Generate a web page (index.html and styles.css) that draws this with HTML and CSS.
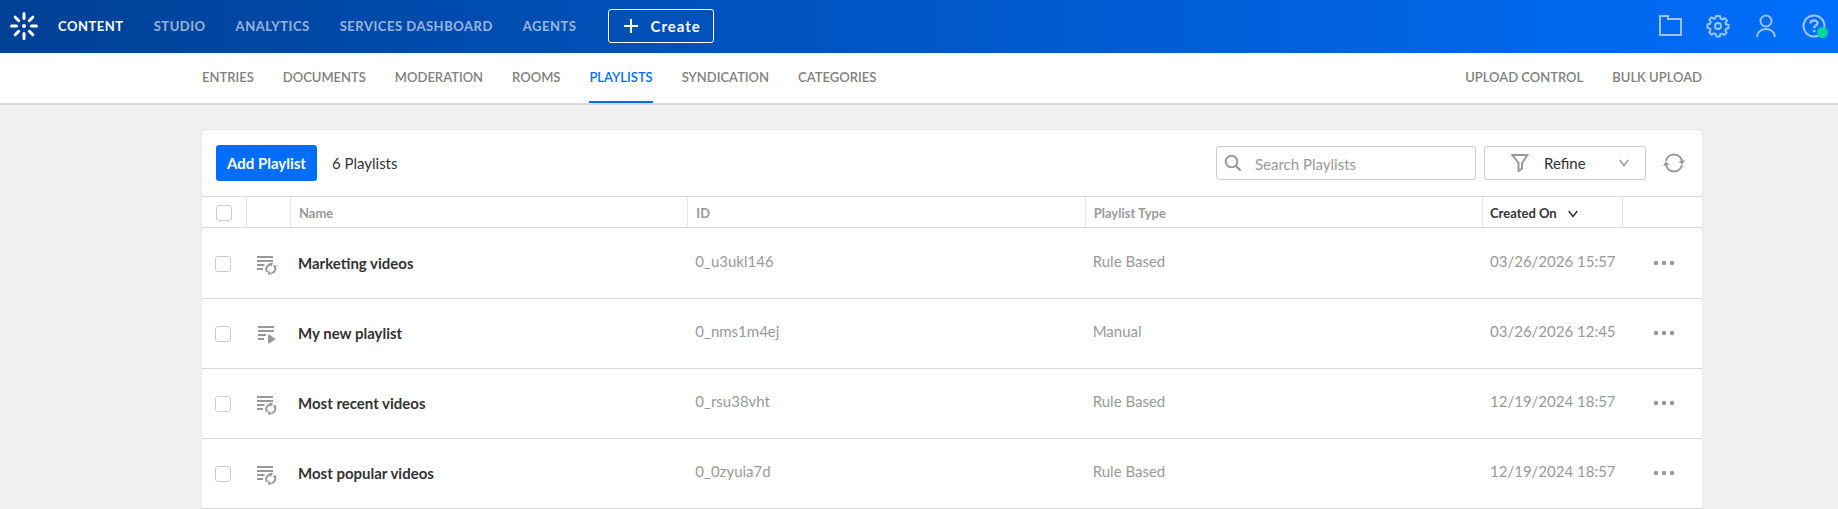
FILE: index.html
```
<!DOCTYPE html>
<html lang="en">
<head>
  <meta charset="UTF-8">
  <meta name="viewport" content="width=device-width, initial-scale=1.0">
  <title>Playlists</title>
  <link rel="stylesheet" href="styles.css">
</head>
<body>
  <svg class="sprite" width="0" height="0">
    <symbol id="icon-rule" viewBox="0 0 20 20">
      <path d="M0 2h16M0 6h16M0 10h7.500M0 14h6" fill="none" stroke="#999" stroke-width="2"/>
      <path d="M13 9.800a4.300 4.300 0 0 0-2.800 7M14.500 18a4.300 4.300 0 0 0 2.800-7" fill="none" stroke="#999" stroke-width="2"/>
      <path d="M12 8h4l-2 4zM11.500 15.500l-.5 4.300 4-.6zM15.500 10.500l4 0-1 3z" fill="#999"/>
    </symbol>
    <symbol id="icon-manual" viewBox="0 0 20 20">
      <path d="M1 2h16M1 6h16M1 10h8M1 14h6" fill="none" stroke="#999" stroke-width="2"/>
      <path d="M11 11q0-2 1.500-1.300l5.200 3.500q1 .8 0 1.600l-5.200 3.500q-1.500.7-1.500-1.300z" fill="#999"/>
    </symbol>
    <symbol id="icon-dots" viewBox="0 0 22 6">
      <circle cx="3" cy="3" r="2.200" fill="#999"/>
      <circle cx="11" cy="3" r="2.200" fill="#999"/>
      <circle cx="19" cy="3" r="2.200" fill="#999"/>
    </symbol>
  </svg>

  <header class="topbar">
    <a class="logo" href="#" aria-label="Home">
      <svg width="28" height="28" viewBox="0 0 28 28" fill="none" stroke="#fff" stroke-width="3" stroke-linecap="round">
        <path d="M14 1.500v5M14 21.500v5M1.500 14h5M21.500 14h5M5.200 5.200l3.500 3.500M19.300 19.300l3.500 3.500M5.200 22.800l3.500-3.500M19.300 8.700l3.500-3.500"/>
        <circle cx="14" cy="14" r="2" fill="#fff" stroke="none"/>
      </svg>
    </a>
    <nav class="main-nav">
      <a class="active" href="#">CONTENT</a>
      <a href="#">STUDIO</a>
      <a href="#">ANALYTICS</a>
      <a href="#">SERVICES DASHBOARD</a>
      <a href="#">AGENTS</a>
    </nav>
    <button class="create-btn">
      <svg width="14" height="14" viewBox="0 0 14 14"><path d="M7 0v14M0 7h14" stroke="#fff" stroke-width="2"/></svg>
      Create
    </button>
    <div class="tools">
      <a href="#" aria-label="Files">
        <svg width="24" height="24" viewBox="0 0 24 24" fill="none" stroke="currentColor" stroke-width="2"><path d="M2 2h8v3h13v16H2z"/></svg>
      </a>
      <a href="#" aria-label="Settings">
        <svg width="24" height="24" viewBox="0 0 24 24" fill="none" stroke="currentColor" stroke-width="2" stroke-linejoin="round">
          <path d="M10 2h4l.6 2.600 1.800.8L18.700 4l2.300 2.700-1.500 2.200.5 1.400 2.500.5v3.400l-2.500.6-.7 1.700L20.600 18.700 18 21l-2.200-1.400-1.500.5L13.700 22.500h-3.400l-.6-2.500-1.700-.7L5.700 20.700 3.300 18.300l1.300-2.200L4 14.500l-2.500-.6v-3.600L4 9.800l.7-1.700L3.300 5.700 5.700 3.300l2.200 1.400 1.600-.6z"/>
          <circle cx="12" cy="12" r="3"/>
        </svg>
      </a>
      <a href="#" aria-label="Account">
        <svg width="24" height="24" viewBox="0 0 24 24" fill="none" stroke="currentColor" stroke-width="2"><circle cx="12" cy="7" r="5.500"/><path d="M3 23a9 8 0 0 1 18 0"/></svg>
      </a>
      <a class="help" href="#" aria-label="Help">
        <svg width="24" height="24" viewBox="0 0 24 24" fill="none" stroke="currentColor" stroke-width="2"><circle cx="12" cy="12" r="10.500"/><path d="M8.500 9.500c0-4 7-4 7-.3 0 2.500-3.300 2.300-3.300 5M12.200 16v2.200" stroke-width="2.400"/></svg>
        <span class="status"></span>
      </a>
    </div>
  </header>

  <div class="subbar">
    <nav class="sub-nav">
      <a href="#">ENTRIES</a>
      <a href="#">DOCUMENTS</a>
      <a href="#">MODERATION</a>
      <a href="#">ROOMS</a>
      <a class="active" href="#">PLAYLISTS</a>
      <a href="#">SYNDICATION</a>
      <a href="#">CATEGORIES</a>
    </nav>
    <nav class="sub-nav">
      <a href="#">UPLOAD CONTROL</a>
      <a href="#">BULK UPLOAD</a>
    </nav>
  </div>

  <main class="content">
    <div class="card">
      <div class="toolbar">
        <button class="add-btn">Add Playlist</button>
        <span class="count">6 Playlists</span>
        <div class="search">
          <svg width="18" height="18" viewBox="0 0 18 18" fill="none" stroke="#999" stroke-width="2"><circle cx="7.500" cy="7.500" r="5.800"/><path d="M11.500 11.500l5 5" stroke-width="2.400"/></svg>
          <input type="text" placeholder="Search Playlists" aria-label="Search Playlists">
        </div>
        <button class="refine-btn">
          <svg width="18" height="18" viewBox="0 0 18 18" fill="none" stroke="#999" stroke-width="2"><path d="M1.500 1h15L11 9v5.500L7.500 17V9z"/></svg>
          <span>Refine</span>
          <svg width="10" height="8" viewBox="0 0 10 8" fill="none" stroke="#999" stroke-width="1.500"><path d="M.7 1L5 6.500 9.300 1"/></svg>
        </button>
        <button class="refresh-btn" aria-label="Refresh">
          <svg width="22" height="20" viewBox="0 0 22 20" fill="none" stroke="#999" stroke-width="2"><path d="M3 8a8.200 8.200 0 0 1 16 0M19 12a8.200 8.200 0 0 1-16 0"/><path d="M15.500 8.500l4 3 2.500-4.500zM6.500 11.500l-4-3L0 13z" fill="#999" stroke="none"/></svg>
        </button>
      </div>

      <table>
        <colgroup>
          <col class="col-check">
          <col class="col-icon">
          <col>
          <col>
          <col>
          <col class="col-date">
          <col class="col-menu">
        </colgroup>
        <thead>
          <tr>
            <th><input type="checkbox" aria-label="Select all"></th>
            <th></th>
            <th>Name</th>
            <th>ID</th>
            <th>Playlist Type</th>
            <th class="sorted">Created On <svg width="10" height="8" viewBox="0 0 10 8" fill="none" stroke="#333" stroke-width="1.500"><path d="M.7 1L5 6.500 9.300 1"/></svg></th>
            <th></th>
          </tr>
        </thead>
        <tbody>
          <tr>
            <td><input type="checkbox" aria-label="Select Marketing videos"></td>
            <td class="type-icon"><svg width="20" height="20"><use href="#icon-rule"/></svg></td>
            <td class="name">Marketing videos</td>
            <td class="info">0_u3ukl146</td>
            <td class="info">Rule Based</td>
            <td class="info">03/26/2026 15:57</td>
            <td class="menu"><button class="menu-btn" aria-label="Actions"><svg width="22" height="6"><use href="#icon-dots"/></svg></button></td>
          </tr>
          <tr>
            <td><input type="checkbox" aria-label="Select My new playlist"></td>
            <td class="type-icon"><svg width="20" height="20"><use href="#icon-manual"/></svg></td>
            <td class="name">My new playlist</td>
            <td class="info">0_nms1m4ej</td>
            <td class="info">Manual</td>
            <td class="info">03/26/2026 12:45</td>
            <td class="menu"><button class="menu-btn" aria-label="Actions"><svg width="22" height="6"><use href="#icon-dots"/></svg></button></td>
          </tr>
          <tr>
            <td><input type="checkbox" aria-label="Select Most recent videos"></td>
            <td class="type-icon"><svg width="20" height="20"><use href="#icon-rule"/></svg></td>
            <td class="name">Most recent videos</td>
            <td class="info">0_rsu38vht</td>
            <td class="info">Rule Based</td>
            <td class="info">12/19/2024 18:57</td>
            <td class="menu"><button class="menu-btn" aria-label="Actions"><svg width="22" height="6"><use href="#icon-dots"/></svg></button></td>
          </tr>
          <tr>
            <td><input type="checkbox" aria-label="Select Most popular videos"></td>
            <td class="type-icon"><svg width="20" height="20"><use href="#icon-rule"/></svg></td>
            <td class="name">Most popular videos</td>
            <td class="info">0_0zyuia7d</td>
            <td class="info">Rule Based</td>
            <td class="info">12/19/2024 18:57</td>
            <td class="menu"><button class="menu-btn" aria-label="Actions"><svg width="22" height="6"><use href="#icon-dots"/></svg></button></td>
          </tr>
        </tbody>
      </table>
    </div>
  </main>
</body>
</html>
```
FILE: styles.css
```
* {
  box-sizing: border-box;
}
body {
  margin: 0;
  background-color: #f1f1f1;
  color: #333;
  font-family: Lato, "Liberation Sans", sans-serif;
  font-size: 15px;
}
a {
  text-decoration: none;
}
button {
  font-family: inherit;
  font-size: 15px;
  cursor: pointer;
}
svg {
  display: block;
}
.sprite {
  position: absolute;
}

/* top bar */
.topbar {
  display: flex;
  align-items: center;
  height: 53px;
  padding: 0 12px 2px 10px;
  background: linear-gradient(to right, #004095, #006efa);
}
.main-nav {
  display: flex;
  gap: 30px;
  margin-left: 20px;
}
.main-nav a {
  color: rgba(255, 255, 255, 0.6);
  font-size: 13px;
  font-weight: bold;
  letter-spacing: 0.04em;
}
.main-nav a.active {
  color: white;
}
.create-btn {
  display: flex;
  align-items: center;
  gap: 13px;
  height: 34px;
  margin-left: 31px;
  padding: 0 12px 0 15px;
  border: 1px solid white;
  border-radius: 3px;
  background: none;
  color: white;
  font-weight: bold;
  letter-spacing: 1px;
}
.tools {
  display: flex;
  gap: 24px;
  margin-left: auto;
}
.tools a {
  color: rgba(255, 255, 255, 0.6);
}
.help {
  position: relative;
}
.status {
  position: absolute;
  right: -2px;
  bottom: 0;
  width: 11px;
  height: 11px;
  border-radius: 50%;
  background: #00d5a0;
}

/* second level navigation */
.subbar {
  display: flex;
  justify-content: space-between;
  height: 52px;
  padding: 0 136px 0 202px;
  border-bottom: 2px solid #d9d9d9;
  background: white;
}
.sub-nav {
  display: flex;
  gap: 29px;
}
.sub-nav a {
  border-bottom: 2px solid transparent;
  color: #808080;
  font-size: 13px;
  font-weight: 600;
  line-height: 48px;
}
.sub-nav a.active {
  border-color: #006efa;
  color: #006efa;
}

/* playlists */
.content {
  padding: 24px 135px 0 201px;
}
.card {
  border: 1px solid #e6e6e6;
  border-bottom: none;
  border-radius: 4px 4px 0 0;
  background: white;
}
.toolbar {
  display: flex;
  align-items: center;
  height: 66px;
  padding: 0 17px 0 14px;
}
.add-btn {
  height: 36px;
  padding: 0 11px;
  border: none;
  border-radius: 3px;
  background: #006efa;
  color: white;
  font-weight: bold;
}
.count {
  margin-left: 15px;
}
.search {
  display: flex;
  align-items: center;
  gap: 13px;
  width: 260px;
  height: 34px;
  margin-left: auto;
  padding: 0 8px 0 7px;
  border: 1px solid #ccc;
  border-radius: 3px;
}
.search input {
  flex: 1;
  min-width: 0;
  padding: 2px 0 0;
  border: none;
  outline: none;
  font-family: inherit;
  font-size: 15px;
}
.search input::placeholder {
  color: #999;
}
.refine-btn {
  display: flex;
  align-items: center;
  width: 162px;
  height: 34px;
  margin-left: 8px;
  padding: 0 16px 0 26px;
  border: 1px solid #ccc;
  border-radius: 3px;
  background: white;
  color: #333;
}
.refine-btn span {
  flex: 1;
  padding-left: 15px;
  text-align: left;
}
.refresh-btn {
  margin-left: 17px;
  padding: 0;
  border: none;
  background: none;
}
table {
  width: 100%;
  border-spacing: 0;
  table-layout: fixed;
}
.col-check, .col-icon {
  width: 44px;
}
.col-date {
  width: 140px;
}
.col-menu {
  width: 80px;
}
th {
  height: 32px;
  padding: 2px 8px 0;
  border: solid #d9d9d9;
  border-width: 1px 0;
  color: #999;
  font-size: 13px;
  text-align: left;
}
th + th {
  border-left: 1px solid #e6e6e6;
}
th.sorted {
  padding-left: 7px;
  color: #333;
}
th.sorted svg {
  display: inline-block;
  margin-left: 8px;
}
td {
  height: 70px;
  padding: 0 8px;
  border-bottom: 1px solid #d9d9d9;
}
tbody tr:first-child td {
  height: 71px;
  border-top: 1px solid white;
}
th:first-child {
  padding-left: 14px;
}
td:first-child {
  padding-left: 13px;
}
input[type="checkbox"] {
  display: block;
  appearance: none;
  width: 16px;
  height: 16px;
  margin: 0;
  border: 1px solid #ccc;
  border-radius: 3px;
  background: white;
}
td.type-icon {
  padding: 2px 0 0 11px;
}
td.name {
  padding-bottom: 2px;
  font-weight: bold;
}
td.info {
  padding-bottom: 6px;
  padding-right: 0;
  color: #999;
  white-space: nowrap;
}
td.menu {
  padding-bottom: 2px;
}
.menu-btn {
  display: block;
  margin: 0 0 0 23px;
  padding: 0;
  border: none;
  background: none;
}
```
